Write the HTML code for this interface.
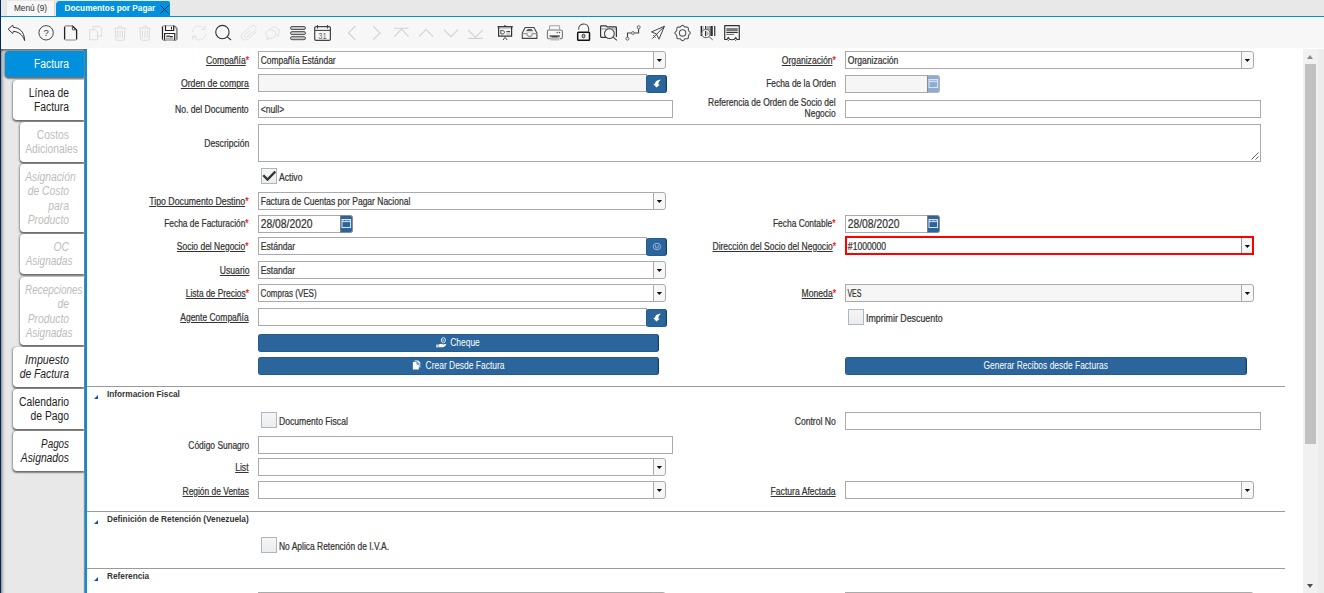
<!DOCTYPE html>
<html lang="es">
<head>
<meta charset="utf-8">
<title>Documentos por Pagar</title>
<style>
*{box-sizing:border-box;margin:0;padding:0}
html,body{width:1324px;height:593px;overflow:hidden;background:#fff}
body{position:relative;font-family:"Liberation Sans",sans-serif;color:#333;font-size:10px}
.abs{position:absolute}
#navy{left:0;top:0;width:1px;height:593px;background:#00265f}
/* tab bar */
#tabbar{left:1px;top:0;width:1323px;height:17px;background:#e8e8e8;border-bottom:1px solid #0090dd}
#tab1{left:6px;top:1px;width:49px;height:15px;background:#f7f7f7;border-left:1px solid #e0e0e0;border-right:1px solid #d8d8d8;font-size:8.25px;line-height:16px;text-align:center;color:#333}
#tab2{left:56px;top:1px;width:114px;height:16px;background:#0090dd;border-radius:4px 2px 0 0;color:#fff;font-weight:700;font-size:8.25px;line-height:16px;padding-left:8.5px;white-space:nowrap}
/* toolbar */
#toolbar{left:2px;top:17px;width:1322px;height:31px;background:#f7f7f7}
#icons{left:0;top:17px;width:760px;height:31px}
/* sidebar */
#side{left:1px;top:49px;width:86px;height:560px;background:#e8e8e8;border-right:2px solid #0090dd;box-shadow:inset 0 2px 2px rgba(0,0,0,.42), inset 2px 0 3px rgba(0,0,0,.27), inset -1px 0 1px rgba(0,0,0,.35)}
.vt{position:absolute;right:1px;background:#fff;border-radius:4px 0 0 4px;box-shadow:0 1.5px 1.4px rgba(0,0,0,.38), -1px 0.5px 2px rgba(0,0,0,.3);padding:6px 15px 0 0;font-size:12px;line-height:14.25px;color:#222}
.vt span{display:block;margin-left:-2px;white-space:nowrap;text-align:right;transform:scaleX(.86);transform-origin:100% 50%;direction:ltr}
.vt.dis{color:#bdbdbd}
.vt.it{font-style:italic}
.vt.act{background:#0090dd;color:#fff}
/* form */
.lb{position:absolute;margin-top:.5px;white-space:nowrap;text-align:right;font-size:10px;line-height:12px;color:#333;transform:scaleX(.86);transform-origin:100% 50%}
.lb u{text-decoration:underline;text-underline-offset:0.5px}
.lb i{font-style:normal;color:#f00;-webkit-text-stroke:.2px #f00}
.fd{position:absolute;height:18px;border:1px solid #aaa;background:#fff;font-size:10px;line-height:16px;color:#333;white-space:nowrap;overflow:hidden}
.fd span{display:inline-block;transform:scaleX(.86);transform-origin:0 50%;padding-left:2px;position:relative;top:1px}
.fd.ro{background:#f6f6f6}
.cb{position:absolute;width:13px;height:18px;border:1px solid #aaa;border-left:1px solid #aaa;background:#f7f7f7;border-radius:0 3px 3px 0}
.cb:after{content:"";position:absolute;left:2.7px;top:7px;width:5.4px;height:3px;background:#111;clip-path:polygon(0 0,100% 0,50% 100%)}
.bb{position:absolute;width:21px;height:18px;background:#2b659b;border-radius:3px;border-right:1px solid #123f78;box-shadow:inset 0 0 0 0.5px rgba(0,60,90,.35)}
.ck{position:absolute;width:16px;height:16px;border:1px solid #a9b8c4;background:linear-gradient(#f6f6f6,#ececec);}
.ct{position:absolute;margin-top:.6px;font-size:10px;line-height:12px;white-space:nowrap;transform:scaleX(.86);transform-origin:0 50%;color:#333}
.btn{position:absolute;height:18px;background:#2b659b;border-radius:3px;color:#fff;font-size:10px;line-height:17px;text-align:center;border-right:1px solid #123f78;box-shadow:inset 0 0 0 0.5px rgba(0,60,90,.35)}
.btn span{display:inline-block;transform:scaleX(.845)}
.fd.dt{font-size:12px;line-height:17px}
.fd.dt span{top:0}
.db{position:absolute;width:13px;height:18px;background:#2b659b;border-radius:0 3px 3px 0;border:1px solid #8c8c8c;border-left-color:#808080}
.db svg{margin:-1px 0 0 -1px}
.db.dis{background:#8facd0;border-color:#b4b4b4;border-left-color:#8a8a8a}
.lb,.fd span,.ct{-webkit-text-stroke:.22px #333}
.sep{position:absolute;left:87px;width:1198px;height:1px;background:#9a9a9a}
.hd{position:absolute;margin-top:1px;left:107px;font-size:8.25px;font-weight:700;line-height:10px;color:#333;white-space:nowrap}
.tri{position:absolute;left:94px;width:0;height:0;border-left:4px solid transparent;border-bottom:4px solid #1a48c8}
</style>
</head>
<body>
<div id="navy" class="abs"></div>
<div id="tabbar" class="abs"></div>
<div id="tab1" class="abs">Menú (9)</div>
<div id="tab2" class="abs">Documentos por Pagar<svg class="abs" style="left:103px;top:3px" width="11" height="11" viewBox="0 0 11 11"><path d="M1.2 1.2 L9.8 9.8 M9.8 1.2 L1.2 9.8" stroke="#04324e" stroke-width="1" fill="none"/></svg></div>
<div id="toolbar" class="abs"></div>
<!--ICONS_START--><svg class="abs" style="left:0;top:0" width="760" height="48" viewBox="0 0 760 48"><path d="M8.2 29.1 L12.7 25.2 L13.4 27.4 C18.5 27.6 24.4 30.8 24.6 40.6 C22.8 34.6 18.2 31.7 13.4 31.3 L12.7 33.5 Z" fill="none" stroke="#333" stroke-width="1" stroke-linejoin="round"/><circle cx="46.1" cy="32.8" r="7.2" fill="none" stroke="#444" stroke-width="1"/><text x="46.1" y="36.1" font-family="Liberation Sans, sans-serif" font-size="9.5" font-weight="400" text-anchor="middle" fill="#333">?</text><path d="M65.2 25.9 L72.2 25.9 M65.2 40 L75.9 40" stroke="#8a8a8a" stroke-width="1.2" fill="none"/><path d="M64.6 39.6 L64.6 26.4 M72.2 25.7 L76.6 30 L76.6 39.6" fill="none" stroke="#222" stroke-width="1.3" stroke-linejoin="round"/><path d="M72.4 26 L72.4 29.8 L76.4 29.8" fill="none" stroke="#555" stroke-width="1"/><path d="M93 29 L93 26.3 L99.2 26.3 L101.6 28.6 L101.6 36.2 L98 36.2" fill="none" stroke="#dcdcdc" stroke-width="1"/><path d="M89.6 29.7 L95.4 29.7 L97.6 31.9 L97.6 39.8 L89.6 39.8 Z" fill="none" stroke="#dcdcdc" stroke-width="1"/><path d="M114.5 28.2 L125.69999999999999 28.2 M117.39999999999999 28 Q120.1 23.4 122.8 28 M115.3 28.4 L115.8 39 Q115.89999999999999 40.3 117.1 40.3 L123.1 40.3 Q124.3 40.3 124.39999999999999 39 L124.89999999999999 28.4 M117.69999999999999 30.5 L117.69999999999999 37.6 M120.1 30.5 L120.1 37.6 M122.5 30.5 L122.5 37.6" fill="none" stroke="#dcdcdc" stroke-width="1"/><path d="M139.3 28.2 L150.5 28.2 M142.20000000000002 28 Q144.9 23.4 147.6 28 M140.1 28.4 L140.6 39 Q140.70000000000002 40.3 141.9 40.3 L147.9 40.3 Q149.1 40.3 149.20000000000002 39 L149.70000000000002 28.4 M142.5 30.5 L142.5 37.6 M144.9 30.5 L144.9 37.6 M147.3 30.5 L147.3 37.6" fill="none" stroke="#dcdcdc" stroke-width="1"/><path d="M162.5 27 Q162.5 25.8 163.7 25.8 L174.2 25.8 L177 28.6 L177 39 Q177 40.2 175.8 40.2 L163.7 40.2 Q162.5 40.2 162.5 39 Z" fill="#fdfdfd" stroke="#9a9a9a" stroke-width="1.1"/><path d="M162.5 39.4 L162.5 26.6" stroke="#222" stroke-width="1.2"/><path d="M174.4 26 L176.7 28.4 L176.7 39.6" fill="none" stroke="#8c8c8c" stroke-width="1.6"/><path d="M165.5 25.6 L165.5 30.5 L173.7 30.5 L173.7 25.6" fill="none" stroke="#222" stroke-width="1.2"/><path d="M171.5 26.8 L171.5 29.4" stroke="#222" stroke-width="1"/><rect x="166" y="37.4" width="7.4" height="3.2" fill="#b5b5b5"/><path d="M164.6 40.4 L164.6 33.5 L174.7 33.5 L174.7 40.4" fill="none" stroke="#2a2a2a" stroke-width="1.2"/><path d="M166.3 36.2 L170 36.2 M170 36.6 L172.8 36.6" stroke="#333" stroke-width="1.2"/><path d="M192.4 32 A6.6 6.6 0 0 1 204.6 29.4 M205.6 25.6 L205 29.8 L201.2 29.2 M205.8 33.6 A6.6 6.6 0 0 1 193.4 36.4 M192.4 40 L193 36 L197 36.6" fill="none" stroke="#e2e2e2" stroke-width="1"/><circle cx="222.4" cy="32.1" r="6.7" fill="none" stroke="#333" stroke-width="1.1"/><path d="M227.3 36.9 L231 40" stroke="#333" stroke-width="1.1"/><path d="M256.6 31.6 L247.6 39.2 Q244.6 41.4 242 38.8 Q239.6 36 242.4 33.4 L251.6 26 Q254 24.6 255.6 26.4 Q257 28.4 255.2 30.2 L246.6 37.2 Q245.2 38 244.4 37 Q243.6 35.8 244.8 34.8 L250.4 30.2" fill="none" stroke="#e2e2e2" stroke-width="1"/><path d="M270 28.6 A5 4.4 0 1 1 278 34.6 L278.8 36 L276.6 35.4" fill="none" stroke="#e0e0e0" stroke-width="1"/><ellipse cx="270.8" cy="34" rx="5" ry="4.3" fill="#f7f7f7" stroke="#e0e0e0" stroke-width="1"/><path d="M267.6 37.6 L266.8 39.4 L269.4 38.4" fill="none" stroke="#e0e0e0" stroke-width="1"/><rect x="290.5" y="26.5" width="15" height="3" rx="1.5" fill="#c4c4c4" stroke="#555" stroke-width="1"/><rect x="290.5" y="31.6" width="15" height="3" rx="1.5" fill="#c4c4c4" stroke="#555" stroke-width="1"/><rect x="290.5" y="36.7" width="15" height="3" rx="1.5" fill="#c4c4c4" stroke="#555" stroke-width="1"/><rect x="314.7" y="26.6" width="15.7" height="13.7" rx="1.3" fill="none" stroke="#444" stroke-width="1.2"/><path d="M314.7 30.4 L330.4 30.4" stroke="#444" stroke-width="1.1"/><path d="M317.5 25 L317.5 28.6 M327.5 25 L327.5 28.6" stroke="#444" stroke-width="1.1"/><text x="322.5" y="38.8" font-family="Liberation Sans, sans-serif" font-size="8.6" text-anchor="middle" fill="#666" textLength="8.4" lengthAdjust="spacingAndGlyphs">31</text><path d="M355.4 26 L348.4 32.9 L355.4 39.8" fill="none" stroke="#d2d2d2" stroke-width="1.1"/><path d="M373 26 L380 32.9 L373 39.8" fill="none" stroke="#d2d2d2" stroke-width="1.1"/><path d="M394.2 28.2 L408.8 28.2 M394.4 36.6 L401.5 29 L408.6 36.6" fill="none" stroke="#d2d2d2" stroke-width="1.1"/><path d="M419 36.6 L426 29.4 L433 36.6" fill="none" stroke="#d2d2d2" stroke-width="1.1"/><path d="M444 29.6 L451 36.6 L458 29.6" fill="none" stroke="#d2d2d2" stroke-width="1.1"/><path d="M468.2 30.2 L475.4 37.2 L482.6 30.2 M468.2 38.4 L482.8 38.4" fill="none" stroke="#d2d2d2" stroke-width="1.1"/><rect x="497.6" y="27.2" width="15" height="1.4" fill="#b0b0b0"/><path d="M497.5 26.6 L512.8 26.6" stroke="#333" stroke-width="1.1"/><path d="M504 25.8 L506 25.8" stroke="#222" stroke-width="0.8"/><path d="M498.6 27 L498.6 36.2 L511.6 36.2 L511.6 27" fill="none" stroke="#333" stroke-width="1.2"/><path d="M500.8 30.2 L500.8 34 M500.8 30.4 Q504.6 30.2 504.6 32.2 Q504.6 34.4 501 34.2" fill="none" stroke="#555" stroke-width="1"/><path d="M506.4 31.6 L510 31.6" stroke="#444" stroke-width="1.2"/><path d="M506.4 34 L510 34" stroke="#aaa" stroke-width="1"/><path d="M503 40 L505.1 37.4 L507.2 40" fill="none" stroke="#444" stroke-width="1"/><path d="M525.2 27.5 L533.9 27.5 L536.9 33 L536.9 38.4 L522.3 38.4 L522.3 33 Z" fill="none" stroke="#444" stroke-width="1.1"/><path d="M526.6 30.6 L527.8 29.4 L531.4 29.4 L532.6 30.6 Z" fill="#333" stroke="#333" stroke-width="0.6"/><path d="M522.6 33.7 L526.8 33.7 Q527.4 36.6 529.6 36.6 Q531.8 36.6 532.4 33.7 L536.6 33.7" fill="none" stroke="#9a9a9a" stroke-width="1.3"/><path d="M526 32 L533.2 32" stroke="#ccc" stroke-width="1"/><path d="M549.5 29.6 L549.5 26.6 Q549.5 25.8 550.3 25.8 L558.8 25.8 Q559.6 25.8 559.6 26.6 L559.6 29.6" fill="none" stroke="#a5a5a5" stroke-width="1.1"/><path d="M549.6 38.6 L548.6 38.6 Q547.4 38.6 547.4 37.2 L547.4 31.4 Q547.4 30 548.8 30 L560.6 30 Q562.4 30 562.4 31.4 L562.4 37.2 Q562.4 38.6 561 38.6 L560 38.6" fill="none" stroke="#777" stroke-width="1.1"/><circle cx="557.2" cy="32.5" r="0.7" fill="#444"/><circle cx="559.5" cy="32.5" r="0.7" fill="#444"/><rect x="549.9" y="36.2" width="9.6" height="4.2" rx="1" fill="#bdbdbd"/><path d="M549.6 36 L559.8 36" stroke="#333" stroke-width="1.2"/><path d="M552 36.8 L557.4 36.8" stroke="#222" stroke-width="0.8"/><path d="M578.6 29.6 A5.1 5.1 0 0 1 588.6 27.8 L588.6 31.6" fill="none" stroke="#555" stroke-width="1.2"/><rect x="577.7" y="32.2" width="11.8" height="8" rx="0.8" fill="none" stroke="#111" stroke-width="1.5"/><ellipse cx="583.5" cy="36" rx="1.5" ry="1.9" fill="#bbb" stroke="#333" stroke-width="0.9"/><path d="M608 37.4 L601.4 37.4 Q600.6 37.4 600.6 36.6 L600.6 26.6 Q600.6 25.8 601.4 25.8 L606 25.8 L607.2 26.9 L615.6 26.9 Q616.4 26.9 616.4 27.7 L616.4 37" fill="none" stroke="#333" stroke-width="1.2"/><path d="M601 28.9 L616 28.9" stroke="#999" stroke-width="1.1"/><circle cx="609.4" cy="33.6" r="4.9" fill="#f7f7f7" stroke="#444" stroke-width="1.1"/><path d="M613.2 37.2 L616.8 40.4" stroke="#444" stroke-width="1.1"/><path d="M627.5 37.2 L627.5 33 L638.6 33 L638.6 28.8" fill="none" stroke="#444" stroke-width="1.1"/><circle cx="627.4" cy="38.7" r="1.5" fill="#f7f7f7" stroke="#555" stroke-width="0.9"/><circle cx="632.9" cy="33" r="1.5" fill="#ccc" stroke="#777" stroke-width="0.9"/><circle cx="638.7" cy="27.2" r="1.5" fill="#f7f7f7" stroke="#555" stroke-width="0.9"/><path d="M664.4 26.3 L651.5 31.9 L656.3 33.9 L659 39.2 Z M664.4 26.3 L652.2 38.7 M653.3 35.3 L655.6 37.6" fill="none" stroke="#444" stroke-width="1" stroke-linejoin="round"/><path d="M682.60 25.33 L683.09 25.43 L683.55 25.70 L683.97 26.08 L684.33 26.49 L684.68 26.83 L685.04 27.06 L685.46 27.15 L685.95 27.16 L686.49 27.13 L687.05 27.15 L687.57 27.28 L687.99 27.56 L688.27 27.98 L688.40 28.50 L688.42 29.06 L688.39 29.61 L688.40 30.09 L688.49 30.51 L688.72 30.87 L689.06 31.22 L689.47 31.58 L689.85 32.00 L690.12 32.46 L690.22 32.95 L690.12 33.44 L689.85 33.90 L689.47 34.32 L689.06 34.68 L688.72 35.03 L688.49 35.39 L688.40 35.81 L688.39 36.30 L688.42 36.84 L688.40 37.40 L688.27 37.92 L687.99 38.34 L687.57 38.62 L687.05 38.75 L686.49 38.77 L685.95 38.74 L685.46 38.75 L685.04 38.84 L684.68 39.07 L684.33 39.41 L683.97 39.82 L683.55 40.20 L683.09 40.47 L682.60 40.57 L682.11 40.47 L681.65 40.20 L681.23 39.82 L680.87 39.41 L680.52 39.07 L680.16 38.84 L679.74 38.75 L679.25 38.74 L678.71 38.77 L678.15 38.75 L677.63 38.62 L677.21 38.34 L676.93 37.92 L676.80 37.40 L676.78 36.84 L676.81 36.30 L676.80 35.81 L676.71 35.39 L676.48 35.03 L676.14 34.68 L675.73 34.32 L675.35 33.90 L675.08 33.44 L674.98 32.95 L675.08 32.46 L675.35 32.00 L675.73 31.58 L676.14 31.22 L676.48 30.87 L676.71 30.51 L676.80 30.09 L676.81 29.61 L676.78 29.06 L676.80 28.50 L676.93 27.98 L677.21 27.56 L677.63 27.28 L678.15 27.15 L678.71 27.13 L679.25 27.16 L679.74 27.15 L680.16 27.06 L680.52 26.83 L680.87 26.49 L681.23 26.08 L681.65 25.70 L682.11 25.43Z" fill="none" stroke="#555" stroke-width="1.1"/><circle cx="682.6" cy="32.95" r="3.2" fill="none" stroke="#555" stroke-width="1.1"/><rect x="700" y="26" width="1" height="10" fill="#aaa"/><rect x="701" y="26" width="1.1" height="10" fill="#222"/><rect x="702.6" y="26" width="0.9" height="10" fill="#999"/><rect x="705.1" y="26" width="1.1" height="10" fill="#222"/><rect x="706.4" y="26" width="4" height="10" fill="#a8a8a8"/><rect x="710.4" y="26" width="2.4" height="10" fill="#333"/><rect x="714.2" y="26" width="1.1" height="10" fill="#222"/><circle cx="705.9" cy="33.6" r="4.1" fill="#f2f2f2" stroke="#666" stroke-width="1"/><rect x="705.1" y="31" width="1.1" height="5.2" fill="#222"/><path d="M706.8 31.4 L709 33.6 L706.8 35.8Z" fill="#aaa"/><path d="M709.2 36.8 L712.8 40" stroke="#555" stroke-width="1"/><path d="M724.7 39.5 L724.7 25.7 L739.3 25.7 L739.3 39.5 L737 39.5 L735.7 37.5 L734.4 39.3 Q732 40.2 729.6 39.3 L728.3 37.5 L727 39.5 Z" fill="none" stroke="#333" stroke-width="1.2" stroke-linejoin="round"/><path d="M728.3 40 L728.3 40.8 M735.7 40 L735.7 40.8" stroke="#333" stroke-width="1"/><rect x="726.3" y="28.1" width="11.5" height="3.1" fill="#777"/><rect x="726.3" y="31.9" width="11.5" height="1.1" fill="#333"/><rect x="726.3" y="33.9" width="7.8" height="1.1" fill="#777"/></svg><!--ICONS_END-->
<div id="side" class="abs">
<div class="vt act" style="left:4px;top:2px;height:26px"><span>Factura</span></div>
<div class="vt" style="left:12px;top:31px;height:40px"><span>Línea de</span><span>Factura</span></div>
<div class="vt dis" style="left:19px;top:73px;height:40px"><span>Costos</span><span>Adicionales</span></div>
<div class="vt dis it" style="left:19px;top:115px;height:68px"><span>Asignación</span><span>de Costo</span><span>para</span><span>Producto</span></div>
<div class="vt dis it" style="left:19px;top:185px;height:40px"><span>OC</span><span style="transform:scaleX(.835);margin-left:-3.5px">Asignadas</span></div>
<div class="vt dis it" style="left:19px;top:228px;height:68px"><span style="transform:scaleX(.83);margin-left:-4px">Recepciones</span><span>de</span><span>Producto</span><span style="transform:scaleX(.835);margin-left:-3.5px">Asignadas</span></div>
<div class="vt it" style="left:12px;top:298px;height:40px"><span style="transform:scaleX(.89)">Impuesto</span><span>de Factura</span></div>
<div class="vt" style="left:12px;top:340px;height:40px"><span>Calendario</span><span>de Pago</span></div>
<div class="vt it" style="left:12px;top:382px;height:40px"><span style="transform:scaleX(.82)">Pagos</span><span>Asignados</span></div>
</div>
<div id="form">
<div class="lb" style="right:1075px;top:54px"><u>Compañía</u><i>*</i></div>
<div class="fd" style="left:258px;top:51px;width:396px;height:18px;"><span style="transform:scaleX(.843)">Compañía Estándar</span></div>
<div class="cb" style="left:653px;top:51px"></div>
<div class="lb" style="right:1075px;top:77px;transform:scaleX(0.873)"><u>Orden de compra</u></div>
<div class="fd ro" style="left:258px;top:74px;width:389px;height:18px;"><span></span></div>
<div class="bb" style="left:646px;top:75px"><svg width="21" height="18" viewBox="0 0 21 18" style="position:absolute;left:0;top:0"><path d="M14.9 4.8 C10.8 4.9 9 6.8 8.9 9 L7.1 8.7 L10.4 12.4 L13.8 9.7 L12.4 9.4 C12.3 8 12.8 6.4 14.9 4.8 Z" fill="#fff"/></svg></div>
<div class="lb" style="right:1075px;top:103px">No. del Documento</div>
<div class="fd" style="left:258px;top:100px;width:415px;height:18px;"><span>&lt;null&gt;</span></div>
<div class="lb" style="right:1075px;top:137px">Descripción</div>
<div class="fd" style="left:258px;top:124px;width:1003px;height:38px;"><span></span></div>
<svg class="abs" style="left:1249px;top:150px" width="11" height="11" viewBox="0 0 11 11"><path d="M2.5 9.5 L9.5 2.5 M6.5 9.5 L9.5 6.5" stroke="#555" stroke-width="0.9" fill="none"/></svg>
<div class="ck" style="left:261px;top:168px"><svg width="14" height="14" viewBox="0 0 14 14" style="position:absolute;left:0;top:0"><path d="M1.3 6.2 L5.5 10.5 L13.3 2.5" stroke="#333" stroke-width="2.3" fill="none"/></svg></div>
<div class="ct" style="left:279px;top:171px">Activo</div>
<div class="lb" style="right:1075px;top:195px;transform:scaleX(0.875)"><u>Tipo Documento Destino</u><i>*</i></div>
<div class="fd" style="left:258px;top:192px;width:396px;height:18px;"><span style="transform:scaleX(.849)">Factura de Cuentas por Pagar Nacional</span></div>
<div class="cb" style="left:653px;top:192px"></div>
<div class="lb" style="right:1075px;top:217px;transform:scaleX(0.839)">Fecha de Facturación<i>*</i></div>
<div class="fd dt" style="left:258px;top:215px;width:83px"><span>28/08/2020</span></div>
<div class="db" style="left:340px;top:215px"><svg width="13" height="18" viewBox="0 0 13 18" style="position:absolute;left:0;top:0"><rect x="2" y="4.5" width="8.6" height="8" fill="none" stroke="#d6e5f8" stroke-width="1"/><path d="M2 6.6 L10.6 6.6" stroke="#d6e5f8" stroke-width="1"/><path d="M2.5 5.5 L4 5.5 M5 5.5 L7.6 5.5 M8.6 5.5 L10.1 5.5" stroke="#d6e5f8" stroke-width="0.7" opacity=".6"/></svg></div>
<div class="lb" style="right:1075px;top:240px;transform:scaleX(0.848)"><u>Socio del Negocio</u><i>*</i></div>
<div class="fd" style="left:258px;top:237px;width:389px;height:18px;"><span>Estándar</span></div>
<div class="bb" style="left:646px;top:238px"><svg width="21" height="18" viewBox="0 0 21 18" style="position:absolute;left:0;top:0"><ellipse cx="10.9" cy="8.5" rx="3.7" ry="3.2" fill="none" stroke="#a9c3e0" stroke-width="0.9"/><path d="M9.6 7 L9.6 9.4 Q10.9 10.6 12.2 9.4 L12.2 7" fill="none" stroke="#a9c3e0" stroke-width="0.8"/></svg></div>
<div class="lb" style="right:1075px;top:264px"><u>Usuario</u></div>
<div class="fd" style="left:258px;top:261px;width:396px;height:18px;"><span>Estandar</span></div>
<div class="cb" style="left:653px;top:261px"></div>
<div class="lb" style="right:1075px;top:287px;transform:scaleX(0.843)"><u>Lista de Precios</u><i>*</i></div>
<div class="fd" style="left:258px;top:284px;width:396px;height:18px;"><span style="transform:scaleX(.80)">Compras (VES)</span></div>
<div class="cb" style="left:653px;top:284px"></div>
<div class="lb" style="right:1075px;top:311px;transform:scaleX(0.848)"><u>Agente Compañía</u></div>
<div class="fd" style="left:258px;top:308px;width:389px;height:18px;"><span></span></div>
<div class="bb" style="left:646px;top:309px"><svg width="21" height="18" viewBox="0 0 21 18" style="position:absolute;left:0;top:0"><path d="M14.9 4.8 C10.8 4.9 9 6.8 8.9 9 L7.1 8.7 L10.4 12.4 L13.8 9.7 L12.4 9.4 C12.3 8 12.8 6.4 14.9 4.8 Z" fill="#fff"/></svg></div>
<div class="btn" style="left:258px;top:334px;width:401px"><span><svg width="13" height="11" viewBox="0 0 13 11" style="vertical-align:-2px;margin-right:1px"><circle cx="8.7" cy="3.2" r="2.5" fill="none" stroke="#fff" stroke-width="0.9"/><path d="M8.2 2 L8.2 3.8 L9.6 3.8" fill="none" stroke="#fff" stroke-width="0.7"/><path d="M0.4 7.6 L2 7.4 L2 10.4 L0.4 10.4Z M2.8 7.4 L6 6.8 L8.4 7.6 L12.4 6.8 Q11.6 9.4 8.6 10.2 L2.8 10.2 Z" fill="#fff"/></svg> Cheque</span></div>
<div class="btn" style="left:258px;top:357px;width:401px"><span><svg width="10" height="10" viewBox="0 0 9 10" preserveAspectRatio="none" style="vertical-align:-0.5px"><path d="M2.2 0.4 L6.2 0.4 L8.4 2.6 L8.4 7.6 L7.4 7.6 L7.4 3.4 L5 1.4 L2.2 1.4Z" fill="#fff"/><path d="M0.4 2 L4.4 2 L4.4 4.4 L6.8 4.4 L6.8 9.6 L0.4 9.6 Z M5.2 2.2 L6.8 3.7 L5.2 3.7Z" fill="#fff"/></svg>&nbsp; Crear Desde Factura</span></div>
<div class="lb" style="right:488px;top:54px"><u>Organización</u><i>*</i></div>
<div class="fd" style="left:845px;top:51px;width:397px;height:18px;"><span>Organización</span></div>
<div class="cb" style="left:1241px;top:51px"></div>
<div class="lb" style="right:488px;top:77px;transform:scaleX(0.841)">Fecha de la Orden</div>
<div class="fd ro dt" style="left:845px;top:75px;width:83px"><span></span></div>
<div class="db dis" style="left:927px;top:75px"><svg width="13" height="18" viewBox="0 0 13 18" style="position:absolute;left:0;top:0"><rect x="2" y="4.5" width="8.6" height="8" fill="none" stroke="#d6e5f8" stroke-width="1"/><path d="M2 6.6 L10.6 6.6" stroke="#d6e5f8" stroke-width="1"/><path d="M2.5 5.5 L4 5.5 M5 5.5 L7.6 5.5 M8.6 5.5 L10.1 5.5" stroke="#d6e5f8" stroke-width="0.7" opacity=".6"/></svg></div>
<div class="lb" style="right:488px;top:96px;line-height:11px;transform:scaleX(0.847)">Referencia de Orden de Socio del<br>Negocio</div>
<div class="fd" style="left:845px;top:100px;width:416px;height:18px;"><span></span></div>
<div class="lb" style="right:488px;top:217px;transform:scaleX(0.839)">Fecha Contable<i>*</i></div>
<div class="fd dt" style="left:845px;top:215px;width:83px"><span>28/08/2020</span></div>
<div class="db" style="left:927px;top:215px"><svg width="13" height="18" viewBox="0 0 13 18" style="position:absolute;left:0;top:0"><rect x="2" y="4.5" width="8.6" height="8" fill="none" stroke="#d6e5f8" stroke-width="1"/><path d="M2 6.6 L10.6 6.6" stroke="#d6e5f8" stroke-width="1"/><path d="M2.5 5.5 L4 5.5 M5 5.5 L7.6 5.5 M8.6 5.5 L10.1 5.5" stroke="#d6e5f8" stroke-width="0.7" opacity=".6"/></svg></div>
<div class="lb" style="right:488px;top:240px;transform:scaleX(0.852)"><u>Dirección del Socio del Negocio</u><i>*</i></div>
<div class="fd" style="left:845px;top:236px;width:409px;height:19px;border:2px solid #f00;overflow:visible"><span style="padding-left:1px">#1000000</span><div class="abs" style="right:0;top:0;width:11px;height:15px;background:#f7f7f7;border-left:1px solid #999"><div class="abs" style="left:2.7px;top:7px;width:5.4px;height:3px;background:#111;clip-path:polygon(0 0,100% 0,50% 100%)"></div></div></div>
<div class="lb" style="right:488px;top:287px"><u>Moneda</u><i>*</i></div>
<div class="fd ro" style="left:845px;top:284px;width:397px;height:18px;"><span style="transform:scaleX(.70)">VES</span></div>
<div class="cb" style="left:1241px;top:284px"></div>
<div class="ck" style="left:848px;top:309px"></div>
<div class="ct" style="left:866px;top:312px;transform:scaleX(.883)">Imprimir Descuento</div>
<div class="btn" style="left:845px;top:357px;width:402px"><span>Generar Recibos desde Facturas</span></div>
<div class="sep" style="top:386px"></div><div class="tri" style="top:395px"></div><div class="hd" style="top:389px">Informacion Fiscal</div>
<div class="ck" style="left:261px;top:412px"></div>
<div class="ct" style="left:279px;top:415px">Documento Fiscal</div>
<div class="lb" style="right:488px;top:415px">Control No</div>
<div class="fd" style="left:845px;top:412px;width:416px;height:18px;"><span></span></div>
<div class="lb" style="right:1075px;top:439px;transform:scaleX(0.843)">Código Sunagro</div>
<div class="fd" style="left:258px;top:436px;width:415px;height:18px;"><span></span></div>
<div class="lb" style="right:1075px;top:461px"><u>List</u></div>
<div class="fd" style="left:258px;top:458px;width:396px;height:18px;"><span></span></div>
<div class="cb" style="left:653px;top:458px"></div>
<div class="lb" style="right:1075px;top:485px;transform:scaleX(0.841)"><u>Región de Ventas</u></div>
<div class="fd" style="left:258px;top:481px;width:396px;height:18px;"><span></span></div>
<div class="cb" style="left:653px;top:481px"></div>
<div class="lb" style="right:488px;top:485px"><u>Factura Afectada</u></div>
<div class="fd" style="left:845px;top:481px;width:397px;height:18px;"><span></span></div>
<div class="cb" style="left:1241px;top:481px"></div>
<div class="sep" style="top:511px"></div><div class="tri" style="top:520px"></div><div class="hd" style="top:514px">Definición de Retención (Venezuela)</div>
<div class="ck" style="left:261px;top:537px"></div>
<div class="ct" style="left:279px;top:540px;transform:scaleX(.845)">No Aplica Retención de I.V.A.</div>
<div class="sep" style="top:568px"></div><div class="tri" style="top:577px"></div><div class="hd" style="top:571px">Referencia</div>
<div class="fd" style="left:258px;top:592px;width:396px;height:18px;"><span></span></div><div class="cb" style="left:653px;top:592px"></div>
<div class="fd" style="left:845px;top:592px;width:397px;height:18px;"><span></span></div><div class="cb" style="left:1241px;top:592px"></div>
<div class="abs" style="left:1303px;top:49px;width:15px;height:544px;background:#f1f1f1"></div><div class="abs" style="left:1318px;top:49px;width:6px;height:544px;background:#ececec"></div>
<div class="abs" style="left:1305px;top:64px;width:11px;height:380px;background:#c1c1c1"></div>
<div class="abs" style="left:1307px;top:55px;width:0;height:0;border:3.5px solid transparent;border-top:0;border-bottom:4px solid #8b8b8b"></div>
<div class="abs" style="left:1307px;top:584px;width:0;height:0;border:3.5px solid transparent;border-bottom:0;border-top:4px solid #505050"></div>
</div>
</body>
</html>
